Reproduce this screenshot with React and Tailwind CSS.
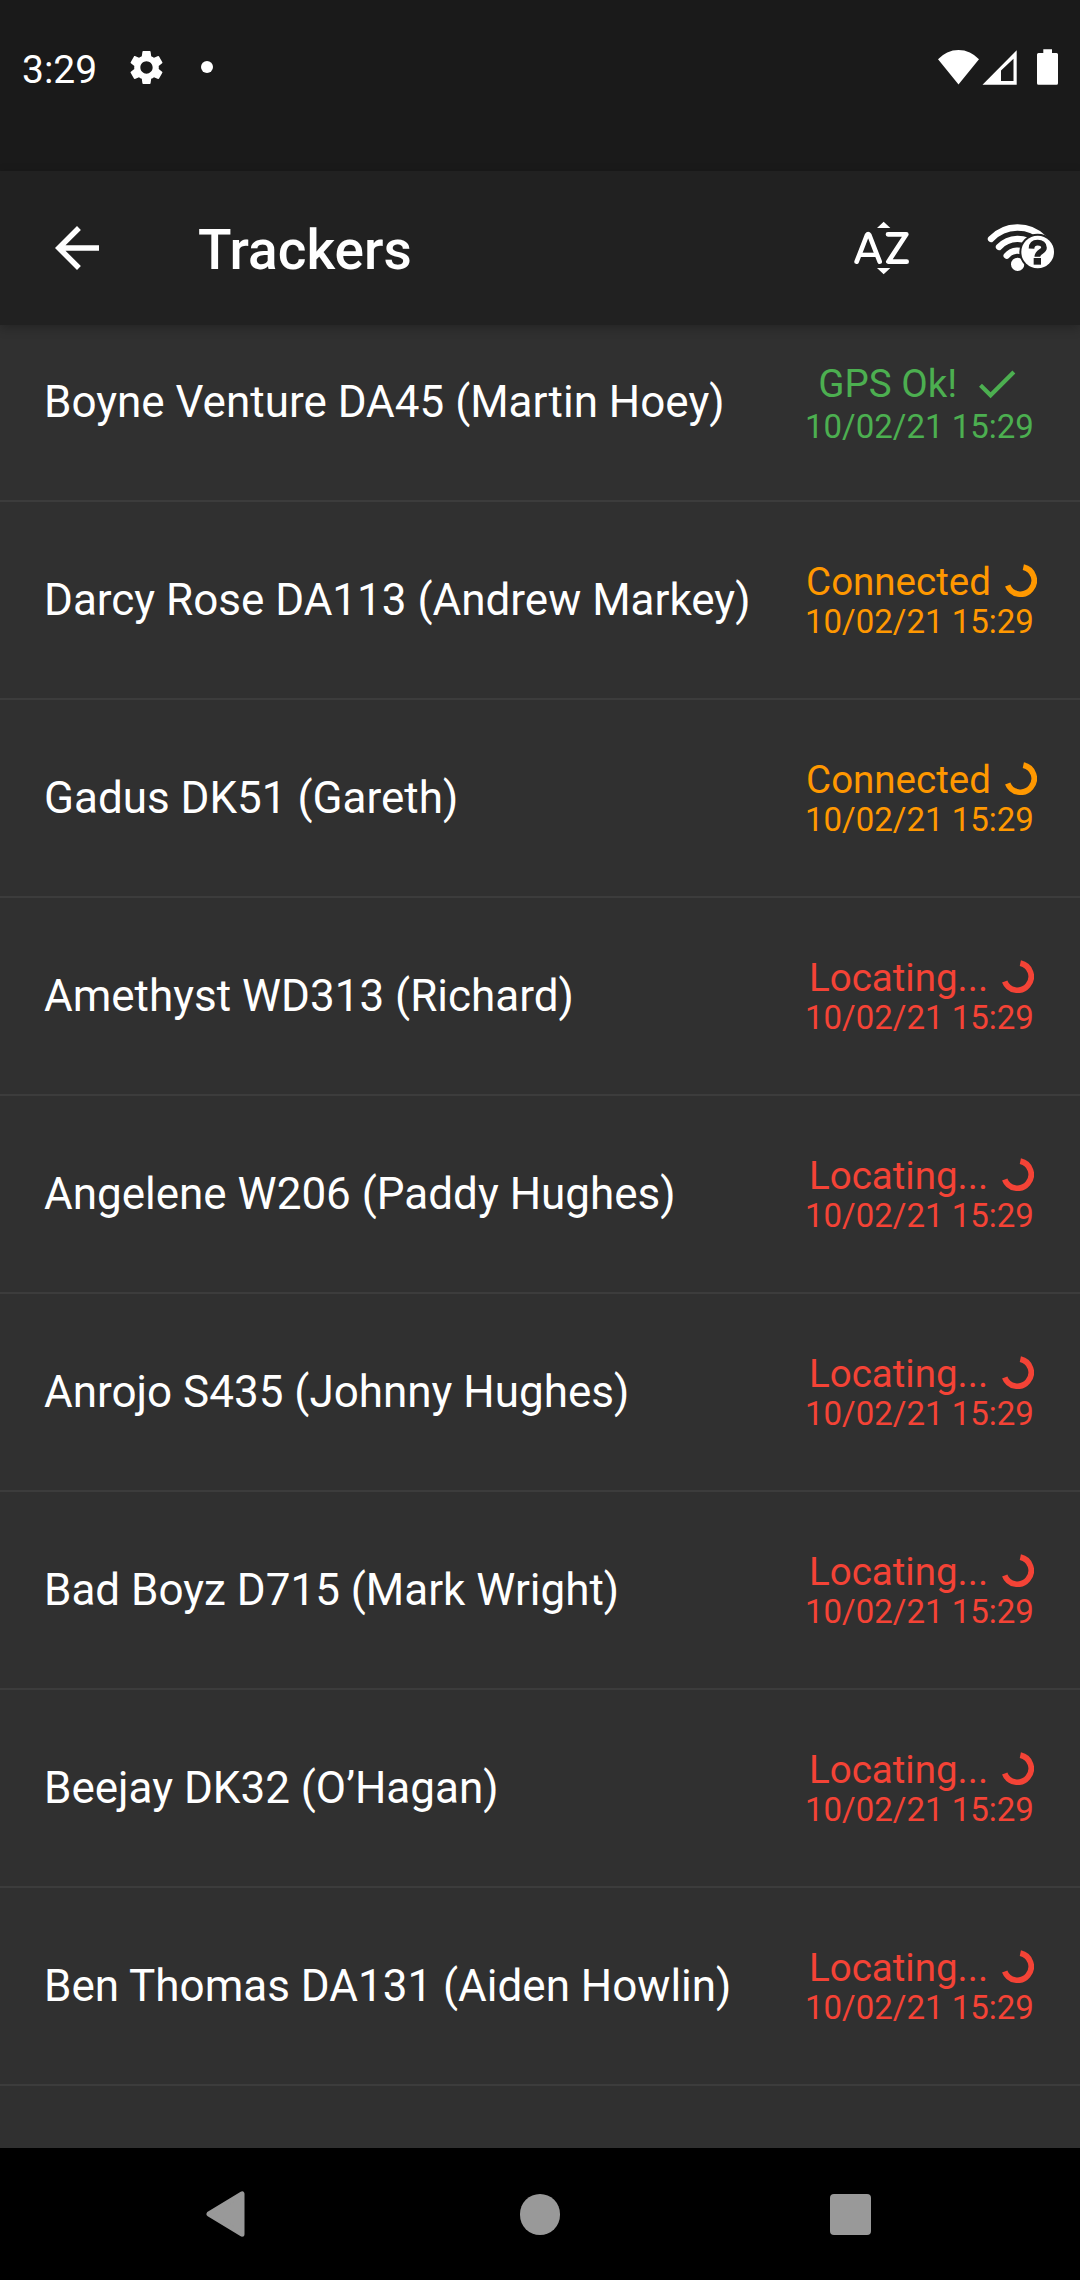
import { MdArrowBack, MdCheck, MdSettings } from "react-icons/md";

const STAMP = "10/02/21 15:29";

const trackers = [
  { name: "Boyne Venture DA45 (Martin Hoey)", status: "ok" },
  { name: "Darcy Rose DA113 (Andrew Markey)", status: "connected" },
  { name: "Gadus DK51 (Gareth)", status: "connected" },
  { name: "Amethyst WD313 (Richard)", status: "locating" },
  { name: "Angelene W206 (Paddy Hughes)", status: "locating" },
  { name: "Anrojo S435 (Johnny Hughes)", status: "locating" },
  { name: "Bad Boyz D715 (Mark Wright)", status: "locating" },
  { name: "Beejay DK32 (O’Hagan)", status: "locating" },
  { name: "Ben Thomas DA131 (Aiden Howlin)", status: "locating" },
];

const styles = {
  ok: { label: "GPS Ok!", color: "text-[#4caf50]" },
  connected: { label: "Connected", color: "text-[#ff9800]" },
  locating: { label: "Locating...", color: "text-[#f44336]" },
};

function Spinner() {
  return (
    <svg className="-mt-[2px] h-[33px] w-[33px] shrink-0" viewBox="-16.5 -16.5 33 33" fill="none">
      <path d="M2.85 -13.4A13.7 13.7 0 1 1 -12.8 4.9" stroke="currentColor" strokeWidth="5.7" />
    </svg>
  );
}

function SortIcon() {
  return (
    <svg className="h-[56px] w-[58px]" viewBox="99 180 174 168" fill="none">
      <path d="M191 185L211 204H171ZM191 343L211 324H171Z" fill="white" />
      <g stroke="white" strokeLinecap="round" strokeLinejoin="round">
        <path d="M110 305L141 225Q144.500 220 148 225L179 305" strokeWidth="14" />
        <path d="M121 284.500H169" strokeWidth="13" strokeLinecap="butt" />
        <path d="M204 223H259L205 305H260" strokeWidth="14" />
      </g>
    </svg>
  );
}

function WifiHelpIcon() {
  return (
    <svg className="h-[52px] w-[70px]" viewBox="498 186 210 156" fill="none">
      <g stroke="white" strokeWidth="19" strokeLinecap="round">
        <path d="M513 237A110 110 0 0 1 671 235" />
        <path d="M537 261A76 76 0 0 1 647 259" />
        <path d="M560 287A42 42 0 0 1 622 284" />
      </g>
      <circle cx="593" cy="313" r="20" fill="white" />
      <circle cx="653" cy="276" r="55" fill="#212121" />
      <circle cx="653" cy="276" r="49" fill="white" />
      <path d="M634.500 266C635 254 642 248 653 248C665 248 672 254 672 263C672 275 652 275 652 290" stroke="#212121" strokeWidth="17" />
      <rect x="641" y="294" width="22" height="20" fill="#212121" />
    </svg>
  );
}

function StatusBar() {
  return (
    <div className="h-[171px] bg-[#1a1a1a]">
      <div className="flex h-[134px] items-center pr-[22px] pl-[22px]">
        <span className="w-[104px] pt-[6px] text-[39px] leading-none">3:29</span>
        <MdSettings className="h-[41px] w-[41px]" />
        <span className="ml-[34px] h-[12px] w-[12px] rounded-full bg-white" />
        <svg className="ml-auto h-[36px] w-[120px]" viewBox="938 49 120 36" fill="white">
          <path d="M938 59.300A27.300 27.300 0 0 1 979 59.300L958.500 84.500Z" />
          <path fillRule="evenodd" d="M982.500 84.700H1016.700V50.200ZM1001 70.500V81H1013.500V58.700Z" />
          <path d="M1043.300 49.300H1052V53H1056.500Q1058 53 1058 54.500V83.200Q1058 84.700 1056.500 84.700H1038.500Q1037 84.700 1037 83.200V54.500Q1037 53 1038.500 53H1043.300Z" />
        </svg>
      </div>
    </div>
  );
}

function AppBar() {
  return (
    <header className="relative z-10 flex h-[154px] items-center bg-[#212121] pr-[24px] pl-[44px] shadow-[0_3px_10px_rgba(0,0,0,0.25)]">
      <MdArrowBack className="h-[66px] w-[66px]" />
      <h1 className="ml-[88px] pt-[4px] text-[55px] leading-none font-medium">Trackers</h1>
      <div className="ml-auto flex items-center gap-[75px]">
        <SortIcon />
        <WifiHelpIcon />
      </div>
    </header>
  );
}

function TrackerRow({ name, status }) {
  const { label, color } = styles[status];
  const ok = status === "ok";
  return (
    <li className="flex h-[198px] justify-between border-b-2 border-[#3c3c3c] pr-[41px] pl-[44px]">
      <span className="self-center text-[44px] leading-none whitespace-nowrap">{name}</span>
      <div className={`w-[234px] pt-[57px] whitespace-nowrap ${color}`}>
        <div className={`flex h-[45px] items-center justify-center text-[38.5px] leading-none ${ok ? "gap-[15px] pr-[4px]" : "gap-[13px] pr-px"}`}>
          <span className="pt-[2px]">{label}</span>
          {ok ? <MdCheck className="h-[49.5px] w-[49.5px] shrink-0" /> : <Spinner />}
        </div>
        <div className={`h-[35px] text-[33px] leading-[35px] ${ok ? "mt-[3px]" : ""}`}>{STAMP}</div>
      </div>
    </li>
  );
}

function NavBar() {
  return (
    <nav className="flex h-[132px] items-center bg-black pl-[206px]">
      <svg className="h-[46px] w-[39px]" viewBox="0 0 39 46" fill="#999999">
        <path d="M3 23L36 2.800V43.200Z" stroke="#999999" strokeWidth="5" strokeLinejoin="round" />
      </svg>
      <span className="ml-[275px] h-[41px] w-[40px] rounded-full bg-[#999999]" />
      <span className="ml-[270px] h-[41px] w-[41px] rounded-[4px] bg-[#999999]" />
    </nav>
  );
}

export default function App() {
  return (
    <div className="flex h-[2280px] w-[1080px] flex-col overflow-hidden bg-[#303030] font-[Roboto,sans-serif] text-white">
      <StatusBar />
      <AppBar />
      <main className="flex-1 overflow-hidden">
        <ul className="-mt-[21px]">
          {trackers.map((t) => (
            <TrackerRow key={t.name} {...t} />
          ))}
        </ul>
      </main>
      <NavBar />
    </div>
  );
}
